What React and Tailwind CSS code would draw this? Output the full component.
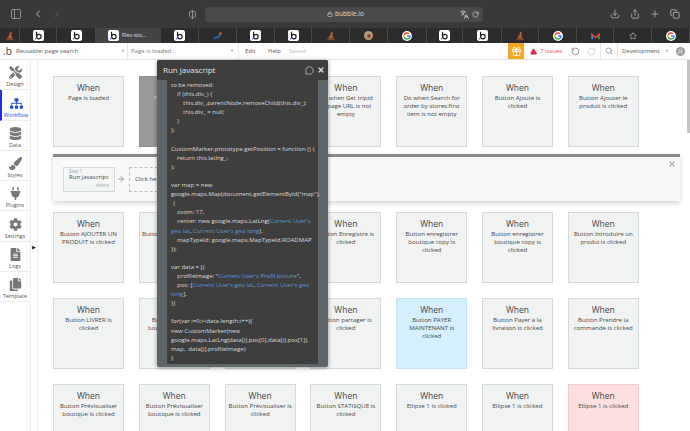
import React from 'react';
import {
  Download, Share, Plus, Copy, ChevronLeft, ChevronRight, Lock, RotateCw, RotateCcw, Search,
  Gift, TriangleAlert, UserRound, X, ArrowRight,
  Star, MessageCircle, Languages, PanelLeft, ShieldHalf
} from 'lucide-react';
import { FaTools, FaSitemap, FaDatabase, FaPaintBrush, FaCog, FaFileAlt, FaCopy, FaPlug } from 'react-icons/fa';

const Bubble = () => (
  <span className="relative flex h-[11px] w-[11px] items-center justify-center rounded-[2px] bg-white">
    <svg viewBox="0 0 12 12" className="h-[9px] w-[9px]">
      <path d="M3.4 1v6.5" stroke="#222" strokeWidth="1.6" fill="none" />
      <circle cx="6.5" cy="7.4" r="3" stroke="#222" strokeWidth="1.6" fill="none" />
      <circle cx="2" cy="10.4" r="1" fill="#2f6fe0" />
    </svg>
  </span>
);

const Google = () => (
  <svg viewBox="0 0 24 24" className="h-[10px] w-[10px] rounded-full bg-white">
    <path d="M21 12.2c0-.7-.1-1.3-.2-1.9H12v3.7h5a4.3 4.3 0 0 1-1.9 2.8v2.3h3A9 9 0 0 0 21 12.2z" fill="#4285f4" />
    <path d="M12 21c2.4 0 4.500-.8 6.100-2.200l-3-2.300a5.500 5.500 0 0 1-8.200-2.900H3.800v2.400A9 9 0 0 0 12 21z" fill="#34a853" />
    <path d="M6.900 13.600a5.400 5.400 0 0 1 0-3.400V7.800H3.800a9 9 0 0 0 0 8.200z" fill="#fbbc05" />
    <path d="M12 6.600c1.300 0 2.500.5 3.500 1.400l2.600-2.600A9 9 0 0 0 3.800 7.800l3.100 2.400A5.400 5.400 0 0 1 12 6.600z" fill="#ea4335" />
  </svg>
);

const Gmail = () => (
  <svg viewBox="0 0 24 24" className="h-[10px] w-[11px]">
    <path d="M2 5v15h4V10z" fill="#4285f4" />
    <path d="M22 5v15h-4V10z" fill="#34a853" />
    <path d="M2 5l10 8 10-8v5l-10 8L2 10z" fill="#ea4335" />
  </svg>
);

const Figure = () => (
  <svg viewBox="0 0 12 12" className="h-[10px] w-[10px]">
    <path d="M6.500 1l2 1-1 3 1.500 4H2.500L5 5z" fill="#b5622c" />
    <rect x="1.500" y="9" width="9" height="2" fill="#7b4a2a" />
  </svg>
);

const Chart = () => (
  <svg viewBox="0 0 12 12" className="h-[10px] w-[10px]">
    <path d="M1 10l3-3 2 1 4-6" stroke="#2a62b8" strokeWidth="2" fill="none" />
    <circle cx="9" cy="3" r="1.500" fill="#d6502e" />
  </svg>
);

const Coin = () => (
  <span className="flex h-[9px] w-[9px] items-center justify-center rounded-full bg-[#b79a78]">
    <span className="h-[4px] w-[4px] rounded-full bg-[#8a4d3a]" />
  </span>
);

const tabs = [
  [Figure, 20], [Bubble, 37], [Bubble, 39], null, [Bubble, 38], [Chart, 38], [Bubble, 38], [Bubble, 37],
  [Figure, 38], [Coin, 38], [Google, 39], [Bubble, 36], [Bubble, 39], [Figure, 37], [Google, 38],
  [Gmail, 37], ['star', 38], [Google, 38],
];

const rows = [
  [
    'Page is loaded',
    { dark: true, text: 'Page is loaded' },
    '',
    'Do when Get tripid\nin page URL is not\nempty',
    'Do when Search for order by stores:first item is not empty',
    'Button Ajoute is clicked',
    'Button Ajouter le produit is clicked',
  ],
  [
    'Button AJOUTER UN PRODUIT is clicked',
    'Button Ajouter mot clé is clicked',
    '',
    'Button Enregistre is clicked',
    'Button enregistrer boutique copy is clicked',
    'Button enregistrer boutique copy is clicked',
    'Button Introduire un produi is clicked',
  ],
  [
    'Button LIVRER is clicked',
    'Button Modifier boutique is clicked',
    '',
    'Button partager is clicked',
    { blue: true, text: 'Button PAYER MAINTENANT is clicked' },
    'Button Payer à la livraison is clicked',
    'Button Prendre la commande is clicked',
  ],
  [
    'Button Prévisualiser boutique is clicked',
    'Button Prévisualiser boutique is clicked',
    'Button Prévisualiser is clicked',
    'Button STATISQUE is clicked',
    'Ellipse 1 is clicked',
    'Ellipse 1 is clicked',
    { pink: true, text: 'Ellipse 1 is clicked' },
  ],
];

const code = [
  [0, 'to be removed.'],
  [6, 'if (this.div_) {'],
  [12, 'this.div_.parentNode.removeChild(this.div_);'],
  [12, 'this.div_ = null;'],
  [6, '}'],
  [0, '};'],
  [0, ''],
  [0, 'CustomMarker.prototype.getPosition = function () {'],
  [6, 'return this.latlng_;'],
  [0, '};'],
  [0, ''],
  [0, 'var map = new'],
  [0, 'google.maps.Map(document.getElementById("map"),'],
  [2, '{'],
  [6, 'zoom: 17,'],
  [6, "center: new google.maps.LatLng(*Current User's*"],
  [0, "*geo lat*, *Current User's geo long*),"],
  [6, 'mapTypeId: google.maps.MapTypeId.ROADMAP'],
  [0, '});'],
  [0, ''],
  [0, 'var data = [{'],
  [6, "profileImage: \"*Current User's Profil picture*\","],
  [6, "pos: [*Current User's geo lat*, *Current User's geo*"],
  [0, '*long*],'],
  [0, '}]'],
  [0, ''],
  [0, 'for(var i=0;i<data.length;i++){'],
  [0, 'new CustomMarker(new'],
  [0, 'google.maps.LatLng(data[i].pos[0],data[i].pos[1]),'],
  [0, 'map,  data[i].profileImage)'],
  [0, '}'],
];

const sideItems = [
  ['Design', FaTools],
  ['Workflow', FaSitemap],
  ['Data', FaDatabase],
  ['Styles', FaPaintBrush],
  ['Plugins', FaPlug],
  ['Settings', FaCog],
  ['Logs', FaFileAlt],
  ['Template', FaCopy],
];

const Card = ({ item }) => {
  const data = typeof item === 'string' ? { text: item } : item;
  let colors = 'bg-[#f1f3f3] border-[#d3d8da] text-[#444]';
  if (data.dark) colors = 'bg-[#999999] border-[#8e8e8e] text-[#d4d4d4]';
  if (data.blue) colors = 'bg-[#d5efff] border-[#bfe5fb] text-[#444]';
  if (data.pink) colors = 'bg-[#fddfdf] border-[#f6c9cb] text-[#444]';

  return (
    <div className={`h-[71px] w-[71px] shrink-0 border px-[2px] pt-[4px] text-center ${colors}`}>
      <div className="text-[8.500px] leading-[13px]">When</div>
      <div className="text-[6.100px] leading-[8px] whitespace-pre-line">{data.text}</div>
    </div>
  );
};

const CodeLine = ({ indent, text }) => (
  <div className="h-[9.100px] whitespace-pre" style={{ paddingLeft: indent }}>
    {text.split('*').map((part, i) => (
      <span key={i} className={i % 2 ? 'text-[#5b9bd9]' : ''}>{part}</span>
    ))}
  </div>
);

export default function App() {
  return (
    <div className="relative flex h-[431px] w-[690px] flex-col overflow-hidden bg-white font-['Open_Sans',sans-serif]">
      {/* browser toolbar */}
      <div className="flex h-[28px] shrink-0 items-center bg-[#393939] text-[#b5b5b5]">
        <PanelLeft size={12} strokeWidth={1.4} className="ml-[10px]" />
        <ChevronLeft size={12} className="ml-[10px]" />
        <ChevronRight size={12} className="ml-[7px] text-[#666]" />
        <ShieldHalf size={9} className="ml-[125px]" />
        <div className="ml-[8px] flex h-[15px] w-[278px] items-center rounded-[3px] bg-[#4a4a4a] text-[#dedede]">
          <div className="ml-[122px] flex items-center gap-[2px] text-[6.600px]">
            <Lock size={6} />
            <span>bubble.io</span>
          </div>
          <Languages size={9} className="ml-[96px]" />
          <RotateCw size={7} className="ml-[3px]" />
        </div>
        <Download size={10} className="ml-[127px]" />
        <Share size={10} className="ml-[10px]" />
        <Plus size={10} className="ml-[10px]" />
        <Copy size={10} className="ml-[10px]" />
      </div>

      {/* tab strip */}
      <div className="flex h-[15px] shrink-0 bg-[#2c2c2c]">
        {tabs.map((tab, i) => {
          if (!tab) {
            return (
              <div key={i} className="flex w-[65px] items-center gap-[3px] bg-[#444] pl-[12px] text-[5.500px] text-[#e0e0e0]">
                <Bubble />
                <span>Flex-sto...</span>
              </div>
            );
          }
          const [Icon, width] = tab;
          return (
            <div key={i} className="flex items-center justify-center border-r border-[#4a4a4a]" style={{ width }}>
              {Icon === 'star' ? <Star size={8} className="text-[#bbb]" /> : <Icon />}
            </div>
          );
        })}
      </div>

      {/* editor bar */}
      <div className="flex h-[17px] shrink-0 items-center border-b border-[#e4e4e4] text-[6px] text-[#555]">
        <span className="ml-[3px] w-[13px] text-[10px] leading-[10px] text-[#444]">.b</span>
        <span className="w-[105px]">Reusable: page search</span>
        <span className="w-[6px] text-[4px] text-[#999]">▼</span>
        <div className="h-full w-px bg-[#e6e6e6]" />
        <span className="ml-[3px] w-[99px] text-[#777]">Page is loaded</span>
        <span className="w-[8px] text-[4px] text-[#999]">▼</span>
        <div className="h-full w-px bg-[#e6e6e6]" />
        <span className="ml-[6px] w-[23px]">Edit</span>
        <span className="w-[21px]">Help</span>
        <span className="w-[219px] text-[#bbb]">Saved</span>
        <div className="flex h-full w-[16px] items-center justify-center bg-[#f5a623]">
          <Gift size={11} className="text-white" />
        </div>
        <TriangleAlert size={7} fill="#e5264f" className="ml-[6px] text-[#e5264f]" />
        <span className="ml-[3px] w-[22px] whitespace-nowrap text-[#e8467a]">7 issues</span>
        <RotateCcw size={9} className="ml-[9px] text-[#777]" />
        <RotateCw size={9} className="ml-[7px] text-[#ccc]" />
        <div className="ml-[4px] h-full w-px bg-[#e6e6e6]" />
        <Search size={8} className="ml-[4px] text-[#777]" />
        <div className="ml-[4px] h-full w-px bg-[#e6e6e6]" />
        <span className="ml-[4px] w-[43px]">Development</span>
        <span className="w-[11px] text-[4px] text-[#999]">▼</span>
        <span className="flex h-[9px] w-[9px] items-center justify-center rounded-full bg-[#999]">
          <UserRound size={7} className="text-white" />
        </span>
      </div>

      <div className="relative flex min-h-0 flex-1">
        {/* left nav */}
        <div className="flex w-[38px] shrink-0 border-r border-[#ececec]">
          <div className="relative w-[31px] shrink-0 border-r border-[#ececec]">
            {sideItems.map(([label, Icon]) => {
              const active = label === 'Workflow';
              return (
                <div
                  key={label}
                  className={`flex h-[30.300px] flex-col items-center justify-end border-b border-[#ececec] pb-[1px] ${active ? 'border-l-2 border-l-[#1f2fd8] text-[#1f3fd8]' : 'text-[#555]'}`}
                >
                  <Icon size={13} className={active ? 'text-[#1f4bc8]' : 'text-[#777]'} />
                  <span className="mt-[2px] text-[5.500px] leading-[7px]">{label}</span>
                </div>
              );
            })}
          </div>
          <span className="mt-[184px] ml-[1px] text-[5px] leading-[6px] text-[#222]">▶</span>
        </div>

        {/* workflow canvas */}
        <div className="ml-[15px] min-w-0 flex-1 pt-[16px]">
          <div className="flex gap-[14.800px]">
            {rows[0].map((item, i) => <Card key={i} item={item} />)}
          </div>

          <div className="mt-[7px] mb-[11px] flex h-[47px] w-[627px] items-center border-t-[3px] border-[#8a8a8a] bg-[#f8f8f8] shadow-[0_2px_5px_rgba(0,0,0,0.18)]">
            <div className="ml-[10px] h-[25px] w-[52px] border border-[#d3d8da] bg-[#f4f5f5] px-[5px] text-[6px] leading-[7px] whitespace-nowrap text-[#444]">
              <div className="text-[4.500px] leading-[6px] text-[#999]">Step 1</div>
              <div>Run javascript</div>
              <div className="text-right text-[4.500px] leading-[8px] text-[#aaa]">delete</div>
            </div>
            <ArrowRight size={8} strokeWidth={3} className="ml-[2px] text-[#999]" />
            <div className="ml-[4px] flex h-[25px] w-[60px] items-center border border-dashed border-[#bbb] pl-[5px] text-[6px] text-[#444]">
              Click here to add
            </div>
            <X size={8} strokeWidth={4} className="mt-[-30px] ml-[479px] text-[#a9b6bd]" />
          </div>

          {rows.slice(1).map((row, r) => (
            <div key={r} className="mb-[15px] flex gap-[14.800px]">
              {row.map((item, i) => <Card key={i} item={item} />)}
            </div>
          ))}
        </div>

        {/* scrollbar */}
        <div className="absolute top-0 right-0 h-[73px] w-[3px] bg-[#c4c4c4]" />
      </div>

      {/* javascript action modal */}
      <div className="absolute top-[60px] left-[157px] flex h-[307px] w-[171px] flex-col rounded-[2px] bg-[#5f6669] pb-[3px] shadow-[0_1px_4px_rgba(0,0,0,0.4)]">
        <div className="flex h-[20px] shrink-0 items-center rounded-t-[2px] bg-[#3e3e3e] pl-[6px] text-[8px] text-[#e4e4e4]">
          <span className="flex-1">Run javascript</span>
          <MessageCircle size={9} className="text-[#c9c9c9]" />
          <X size={8} strokeWidth={4} className="mr-[3px] ml-[3px] text-[#d5d5d5]" />
        </div>
        <div className="mx-[10px] flex-1 bg-[#3e3e3e] pt-[1px] pl-[4px] text-[6.050px] leading-[9.100px] text-[#dcdcdc]">
          {code.map(([indent, text], i) => <CodeLine key={i} indent={indent} text={text} />)}
        </div>
      </div>
    </div>
  );
}
